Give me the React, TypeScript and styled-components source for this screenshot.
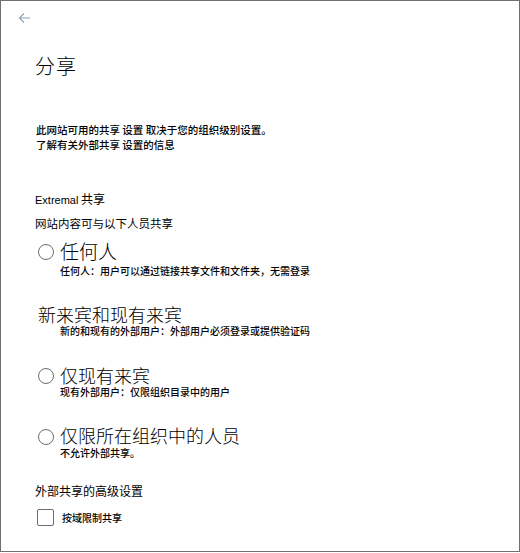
import React from "react";
import styled, { createGlobalStyle } from "styled-components";

const Global = createGlobalStyle`
  html, body { margin: 0; padding: 0; background: #ffffff; }
  * { box-sizing: border-box; }
`;

const CJK = `"Noto Sans CJK SC", "Noto Sans", sans-serif`;

const Frame = styled.div`
  width: 520px;
  height: 552px;
  border: 1px solid #707070;
  background: #ffffff;
  font-family: ${CJK};
  color: #000;
  display: flex;
  flex-direction: column;
`;

const TopBar = styled.div`
  height: 34px;
  display: flex;
  align-items: center;
  padding-left: 16px;
`;

const BackButton = styled.button`
  border: none;
  background: transparent;
  padding: 0;
  width: 14px;
  height: 14px;
  display: flex;
  align-items: center;
  justify-content: center;
  cursor: pointer;
`;

const Content = styled.div`
  padding-left: 34px;
  display: flex;
  flex-direction: column;
`;

const Title = styled.h1`
  margin: 19px 0 0 0;
  font-size: 20px;
  line-height: 24px;
  font-weight: 300;
  letter-spacing: 1px;
`;

const Intro = styled.p`
  margin: 44px 0 0 1px;
  font-size: 10.5px;
  line-height: 15px;
  font-weight: 500;
`;

const SectionLabel = styled.div<{ $mt: number; $size: number }>`
  margin-top: ${(p) => p.$mt}px;
  font-size: ${(p) => p.$size}px;
  line-height: 16px;
  font-weight: 400;
`;

const Latin = styled.span`
  font-family: "Liberation Sans", Arial, sans-serif;
  font-size: 11px;
`;

const OptionBlock = styled.div<{ $mt: number }>`
  margin-top: ${(p) => p.$mt}px;
  display: flex;
  flex-direction: column;
`;

const OptionRow = styled.label`
  display: flex;
  align-items: flex-start;
  gap: 6px;
  padding-left: 3px;
  cursor: pointer;
`;

const Radio = styled.span`
  width: 16px;
  height: 16px;
  margin-top: 3.5px;
  border-radius: 50%;
  border: 1.5px solid #6e6e6e;
  flex: none;
`;

const OptionTitle = styled.span<{ $size: number }>`
  font-size: ${(p) => p.$size}px;
  line-height: 20px;
  font-weight: 300;
`;

const OptionDesc = styled.div<{ $gap: number }>`
  margin-top: ${(p) => p.$gap}px;
  padding-left: 25px;
  font-size: 10px;
  line-height: 13px;
  font-weight: 500;
`;

const CheckRow = styled.label`
  margin-top: 10px;
  display: flex;
  align-items: center;
  gap: 8px;
  padding-left: 2px;
  cursor: pointer;
`;

const CheckBox = styled.span`
  width: 17px;
  height: 17px;
  border: 1.5px solid #6e6e6e;
  border-radius: 2px;
  flex: none;
`;

const CheckLabel = styled.span`
  font-size: 10px;
  line-height: 14px;
  font-weight: 500;
`;

type Opt = {
  title: string;
  desc: string;
  radio: boolean;
  mt: number;
  gap: number;
  size: number;
};

const options: Opt[] = [
  {
    title: "任何人",
    desc: "任何人：用户可以通过链接共享文件和文件夹，无需登录",
    radio: true,
    mt: 9.5,
    gap: 3,
    size: 19,
  },
  {
    title: "新来宾和现有来宾",
    desc: "新的和现有的外部用户：外部用户必须登录或提供验证码",
    radio: false,
    mt: 27,
    gap: 0,
    size: 18,
  },
  {
    title: "仅现有来宾",
    desc: "现有外部用户：仅限组织目录中的用户",
    radio: true,
    mt: 28,
    gap: 0,
    size: 18,
  },
  {
    title: "仅限所在组织中的人员",
    desc: "不允许外部共享。",
    radio: true,
    mt: 27.5,
    gap: 1,
    size: 18,
  },
];

export default function App() {
  return (
    <>
      <Global />
      <Frame>
        <TopBar>
          <BackButton aria-label="返回">
            <svg width="13" height="12" viewBox="0 0 13 12" fill="none">
              <path
                d="M12 6H1.5M6 1.5L1.5 6L6 10.5"
                stroke="#8fa0b4"
                strokeWidth="1.1"
              />
            </svg>
          </BackButton>
        </TopBar>
        <Content>
          <Title>分享</Title>
          <Intro>
            此网站可用的共享 设置 取决于您的组织级别设置。
            <br />
            了解有关外部共享 设置的信息
          </Intro>
          <SectionLabel $mt={39} $size={12}>
            <Latin>Extremal</Latin> 共享
          </SectionLabel>
          <SectionLabel $mt={7} $size={11.5}>
            网站内容可与以下人员共享
          </SectionLabel>
          {options.map((o) => (
            <OptionBlock key={o.title} $mt={o.mt}>
              <OptionRow>
                {o.radio && <Radio />}
                <OptionTitle $size={o.size}>{o.title}</OptionTitle>
              </OptionRow>
              <OptionDesc $gap={o.gap}>{o.desc}</OptionDesc>
            </OptionBlock>
          ))}
          <SectionLabel $mt={24} $size={12}>
            外部共享的高级设置
          </SectionLabel>
          <CheckRow>
            <CheckBox />
            <CheckLabel>按域限制共享</CheckLabel>
          </CheckRow>
        </Content>
      </Frame>
    </>
  );
}
